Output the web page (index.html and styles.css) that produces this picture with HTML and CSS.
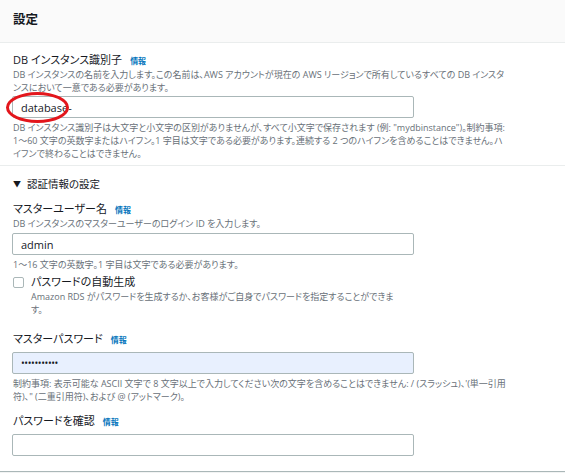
FILE: index.html
```html
<!DOCTYPE html>
<html lang="ja">
<head>
<meta charset="utf-8">
<title>設定</title>
<link rel="stylesheet" href="styles.css">
</head>
<body>
<div class="panel">
  <div class="panel-header">
    <h2 class="panel-title">設定</h2>
  </div>

  <div class="section">
    <div class="field">
      <div class="label">DB インスタンス識別子 <a class="info" href="#">情報</a></div>
      <div class="desc">DB インスタンスの名前を入力します。この名前は、AWS アカウントが現在の AWS リージョンで所有しているすべての DB インスタンスにおいて一意である必要があります。</div>
      <div class="control">
        <input class="input" type="text" value="database-">
        <span class="mark"></span>
      </div>
      <div class="desc hint">DB インスタンス識別子は大文字と小文字の区別がありませんが、すべて小文字で保存されます (例: "mydbinstance")。制約事項: 1～60 文字の英数字またはハイフン。1 字目は文字である必要があります。連続する 2 つのハイフンを含めることはできません。ハイフンで終わることはできません。</div>
    </div>
  </div>

  <div class="section section-last">
    <div class="expander"><span class="caret">▼</span>認証情報の設定</div>

    <div class="field">
      <div class="label">マスターユーザー名 <a class="info" href="#">情報</a></div>
      <div class="desc">DB インスタンスのマスターユーザーのログイン ID を入力します。</div>
      <div class="control control-user">
        <input class="input" type="text" value="admin">
      </div>
      <div class="desc hint">1～16 文字の英数字。1 字目は文字である必要があります。</div>
    </div>

    <label class="check">
      <span class="box"></span>
      <span class="check-body">
        <span class="check-label">パスワードの自動生成</span>
        <span class="desc check-desc">Amazon RDS がパスワードを生成するか、お客様がご自身でパスワードを指定することができます。</span>
      </span>
    </label>

    <div class="field field-gap">
      <div class="label">マスターパスワード <a class="info" href="#">情報</a></div>
      <div class="control">
        <input class="input autofill" type="password" value="abcdefghijk">
      </div>
      <div class="desc hint">制約事項: 表示可能な ASCII 文字で 8 文字以上で入力してください次の文字を含めることはできません: / (スラッシュ)、'(単一引用符)、" (二重引用符)、および @ (アットマーク)。</div>
    </div>

    <div class="field field-gap confirm">
      <div class="label">パスワードを確認 <a class="info" href="#">情報</a></div>
      <div class="control">
        <input class="input" type="password" value="">
      </div>
    </div>
  </div>
</div>
</body>
</html>
```

FILE: styles.css
```css
* {
  box-sizing: border-box;
}

body {
  margin: 0;
  background: #f2f3f3;
  font-family: "Open Sans", "Noto Sans CJK JP", sans-serif;
  font-feature-settings: "palt";
  color: #16191f;
}

.panel {
  background: #ffffff;
  border-bottom: 1px solid #aab7b8;
  padding-bottom: 15px;
}

.panel-header {
  height: 43px;
  background: #fafafa;
  border-bottom: 1px solid #eaeded;
  display: flex;
  align-items: center;
  padding-left: 13px;
}

.panel-title {
  margin: 0 0 3px;
  font-size: 12.5px;
  font-weight: 700;
  line-height: 18px;
}

.section {
  padding: 9px 12px 5px 13px;
  border-bottom: 1px solid #eaeded;
}

.section-last {
  border-bottom: 0;
  padding-top: 10px;
  padding-bottom: 0;
}

.field {
  width: 496px;
}

.field-gap {
  margin-top: 15px;
}

.confirm {
  margin-top: 10px;
}

.label {
  font-size: 11px;
  line-height: 15px;
  display: flex;
  align-items: baseline;
  gap: 8px;
}

.info {
  font-size: 8px;
  font-weight: 700;
  color: #0073bb;
  text-decoration: none;
}

.desc {
  font-size: 9px;
  line-height: 13px;
  color: #687078;
}

.hint {
  margin-top: 3px;
}

.control {
  position: relative;
  width: 402px;
  margin-top: 2px;
}

.control-user {
  margin-top: 3px;
}

.field-gap .control {
  margin-top: 5px;
}

.input {
  display: block;
  width: 100%;
  height: 22px;
  margin: 0 0 0 -1px;
  padding: 0 8px;
  border: 1px solid #aab7b8;
  border-radius: 2px;
  background: #ffffff;
  font: inherit;
  font-size: 11px;
  color: #16191f;
  outline: none;
}

.autofill {
  background: #e8f0fe;
  font-size: 10px;
  letter-spacing: -0.4px;
}

/* red annotation ring drawn over the identifier value */
.mark {
  position: absolute;
  left: -7px;
  top: -4px;
  width: 63px;
  height: 31px;
  border: 3px solid #e3161c;
  border-radius: 50%;
  pointer-events: none;
}

.expander {
  font-size: 10.5px;
  line-height: 16px;
  display: flex;
  align-items: center;
}

.caret {
  font-size: 8px;
  width: 14px;
}

.expander + .field {
  margin-top: 9px;
}

.check {
  display: flex;
  align-items: flex-start;
  width: 385px;
  margin-top: 3px;
}

.box {
  flex: none;
  width: 11px;
  height: 11px;
  margin-top: 3px;
  border: 1px solid #aab7b8;
  border-radius: 2px;
  background: #ffffff;
}

.check-body {
  display: flex;
  flex-direction: column;
  margin-left: 7px;
}

.check-label {
  font-size: 11px;
  line-height: 16px;
}

.check-desc {
  display: block;
}
```
